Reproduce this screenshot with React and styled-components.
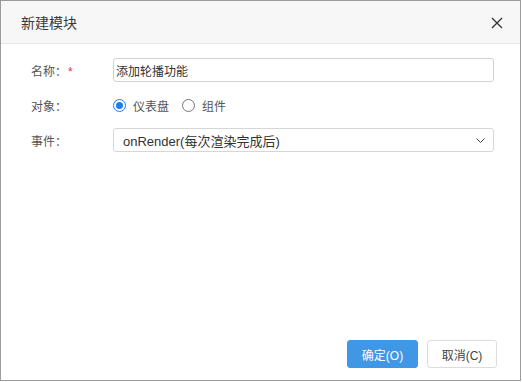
import React, { useState } from "react";
import styled, { createGlobalStyle } from "styled-components";

const GlobalStyle = createGlobalStyle`
  body {
    margin: 0;
    background: #fff;
    font-family: "Liberation Sans", "Noto Sans CJK SC", sans-serif;
  }
`;

function App() {
    const [name, setName] = useState("添加轮播功能");
    const [target, setTarget] = useState("dashboard");

    return (
        <Dialog>
            <GlobalStyle />
            <Header>
                <Title>新建模块</Title>
                <CloseButton aria-label="close">
                    <svg width="12" height="12" viewBox="0 0 12 12">
                        <path d="M1 1L11 11M11 1L1 11" stroke="#333" strokeWidth="1.3" fill="none" />
                    </svg>
                </CloseButton>
            </Header>

            <Body>
                <Row>
                    <Label>名称：<Required>*</Required></Label>
                    <TextInput value={name} onChange={(e) => setName(e.target.value)} />
                </Row>
                <Row>
                    <Label>对象：</Label>
                    <RadioGroup>
                        <RadioItem onClick={() => setTarget("dashboard")}>
                            <RadioDot checked={target === "dashboard"} />
                            仪表盘
                        </RadioItem>
                        <RadioItem onClick={() => setTarget("widget")}>
                            <RadioDot checked={target === "widget"} />
                            组件
                        </RadioItem>
                    </RadioGroup>
                </Row>
                <Row>
                    <Label>事件：</Label>
                    <Select>
                        <span>onRender(每次渲染完成后)</span>
                        <svg width="9" height="5" viewBox="0 0 9 5">
                            <path d="M0.5 0.5L4.5 4.5L8.5 0.5" stroke="#444" strokeWidth="1" fill="none" />
                        </svg>
                    </Select>
                </Row>
            </Body>

            <Footer>
                <Button primary>确定(O)</Button>
                <Button>取消(C)</Button>
            </Footer>
        </Dialog>
    );
}

export default App;

const Dialog = styled.div`
    width: 521px;
    height: 381px;
    box-sizing: border-box;
    border: 1px solid #9b9b9b;
    display: flex;
    flex-direction: column;
    background: #fff;
`;

const Header = styled.div`
    height: 42px;
    background: #f7f7f7;
    border-bottom: 1px solid #e6e6e6;
    display: flex;
    align-items: center;
    justify-content: space-between;
    padding: 0 17px 0 20px;
`;

const Title = styled.div`
    font-size: 14px;
    color: #3a3a3a;
`;

const CloseButton = styled.div`
    width: 12px;
    height: 12px;
    display: flex;
    margin-top: 1px;
`;

const Body = styled.div`
    padding: 14px 26px 0 30px;
    display: flex;
    flex-direction: column;
    gap: 11px;
`;

const Row = styled.div`
    display: grid;
    grid-template-columns: 82px 1fr;
    align-items: center;
    height: 24px;
`;

const Label = styled.div`
    font-size: 12px;
    color: #555;
`;

const Required = styled.span`
    color: #e5393a;
    margin-left: 1px;
`;

const TextInput = styled.input`
    height: 24px;
    box-sizing: border-box;
    border: 1px solid #d2d2d2;
    border-radius: 3px;
    padding: 0 2px;
    font-size: 12px;
    font-family: inherit;
    color: #333;
    outline: none;
`;

const RadioGroup = styled.div`
    display: flex;
    align-items: center;
    gap: 13px;
`;

const RadioItem = styled.label`
    display: flex;
    align-items: center;
    gap: 7px;
    font-size: 12px;
    color: #555;
    cursor: pointer;
`;

const RadioDot = styled.span`
    width: 13px;
    height: 13px;
    box-sizing: border-box;
    border-radius: 50%;
    border: 1px solid ${(p) => (p.checked ? "#1f7fe0" : "#777")};
    display: flex;
    align-items: center;
    justify-content: center;

    &::after {
        content: "";
        width: 7px;
        height: 7px;
        border-radius: 50%;
        background: ${(p) => (p.checked ? "#1f7fe0" : "transparent")};
    }
`;

const Select = styled.div`
    height: 24px;
    box-sizing: border-box;
    border: 1px solid #d6d6d6;
    border-radius: 3px;
    display: flex;
    align-items: center;
    justify-content: space-between;
    padding: 0 8px 0 9px;
    font-size: 13px;
    color: #333;
`;

const Footer = styled.div`
    margin-top: auto;
    display: flex;
    justify-content: flex-end;
    gap: 9px;
    padding: 0 23px 12px 0;
`;

const Button = styled.button`
    width: ${(p) => (p.primary ? "71px" : "70px")};
    height: 28px;
    box-sizing: border-box;
    border-radius: 3px;
    border: 1px solid ${(p) => (p.primary ? "#3f97e6" : "#dcdcdc")};
    background: ${(p) => (p.primary ? "#3f97e6" : "#fff")};
    color: ${(p) => (p.primary ? "#fff" : "#444")};
    font-size: 12px;
    font-family: inherit;
    padding: 0;
`;
